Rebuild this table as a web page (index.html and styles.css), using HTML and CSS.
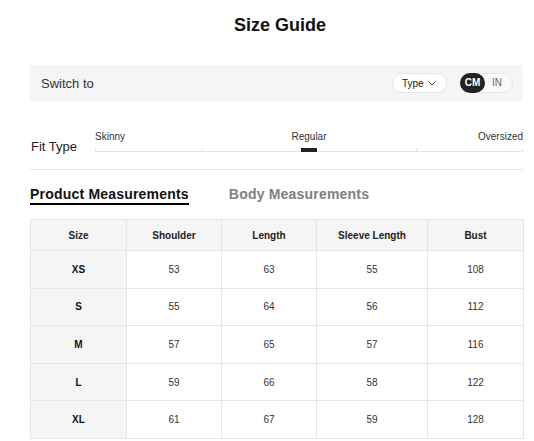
FILE: index.html
```html
<!DOCTYPE html>
<html lang="en">
<head>
<meta charset="utf-8">
<title>Size Guide</title>
<link rel="stylesheet" href="styles.css">
</head>
<body>
<div class="page">
  <h1 class="title">Size Guide</h1>

  <div class="switch-bar">
    <span class="switch-label">Switch to</span>
    <div class="switch-controls">
      <button class="type-pill">Type
        <svg class="chev" width="8" height="5" viewBox="0 0 8 5"><path d="M0.5 0.5 L4 4 L7.5 0.5" fill="none" stroke="#444" stroke-width="1"/></svg>
      </button>
      <div class="unit-toggle">
        <span class="unit active">CM</span>
        <span class="unit">IN</span>
      </div>
    </div>
  </div>

  <div class="fit-row">
    <div class="fit-label">Fit Type</div>
    <div class="fit-slider">
      <div class="fit-names">
        <span class="n-left">Skinny</span>
        <span class="n-mid">Regular</span>
        <span class="n-right">Oversized</span>
      </div>
      <div class="track">
        <span class="track-line"></span>
        <span class="tick t0"></span>
        <span class="tick t1"></span>
        <span class="tick t3"></span>
        <span class="tick t4"></span>
        <span class="marker"></span>
      </div>
    </div>
  </div>

  <div class="divider"></div>

  <div class="tabs">
    <span class="tab active">Product Measurements</span>
    <span class="tab">Body Measurements</span>
  </div>

  <table class="size-table">
    <colgroup>
      <col class="c1"><col class="c2"><col class="c3"><col class="c4"><col class="c5">
    </colgroup>
    <thead>
      <tr><th>Size</th><th>Shoulder</th><th>Length</th><th>Sleeve Length</th><th>Bust</th></tr>
    </thead>
    <tbody>
      <tr><th>XS</th><td>53</td><td>63</td><td>55</td><td>108</td></tr>
      <tr><th>S</th><td>55</td><td>64</td><td>56</td><td>112</td></tr>
      <tr><th>M</th><td>57</td><td>65</td><td>57</td><td>116</td></tr>
      <tr><th>L</th><td>59</td><td>66</td><td>58</td><td>122</td></tr>
      <tr><th>XL</th><td>61</td><td>67</td><td>59</td><td>128</td></tr>
    </tbody>
  </table>
</div>
</body>
</html>
```
FILE: styles.css
```css
* { box-sizing: border-box; }
html, body { margin: 0; padding: 0; background: #fff; }
body { font-family: "Liberation Sans", Arial, sans-serif; color: #222; }

.page { padding: 0 11px 0 30px; width: 534px; }

.title {
  margin: 0 0 29px 0;
  padding: 14px 0 0 7px;
  font-size: 18px;
  line-height: 22px;
  font-weight: 700;
  text-align: center;
  color: #111;
}

.switch-bar {
  height: 36px;
  background: #f5f5f5;
  padding: 0 10px;
  display: flex;
  align-items: center;
  justify-content: space-between;
}
.switch-label { font-size: 13px; color: #333; padding-left: 1px; }
.switch-controls { display: flex; align-items: center; gap: 13px; }

.type-pill {
  height: 20px;
  width: 55px;
  border: 1px solid #e5e5e5;
  border-radius: 10px;
  background: #fff;
  font-family: inherit;
  font-size: 10px;
  color: #222;
  padding: 0 0 0 9px;
  display: flex;
  align-items: center;
  gap: 4px;
  margin: 0 0 0 1px;
}
.chev { display: block; margin-top: 1px; }

.unit-toggle {
  height: 20px;
  border: 1px solid #e5e5e5;
  border-radius: 10px;
  background: #fafafa;
  display: flex;
  align-items: center;
  margin-right: 0;
}
.unit { font-size: 10px; color: #666; padding: 0 10px 0 7px; line-height: 18px; }
.unit.active {
  height: 20px;
  width: 25px;
  margin: -1px 0 -1px -1px;
  padding: 0;
  background: #222;
  color: #fff;
  font-weight: 700;
  border-radius: 10px;
  display: flex;
  align-items: center;
  justify-content: center;
}

.fit-row { display: flex; align-items: flex-start; margin-top: 30px; }
.fit-label { width: 65px; padding-top: 8px; font-size: 13px; line-height: 16px; color: #222; padding-left: 1px; }
.fit-slider { flex: 1; }
.fit-names {
  display: grid;
  grid-template-columns: 1fr auto 1fr;
  font-size: 10px;
  line-height: 12px;
  color: #333;
}
.n-left { text-align: left; }
.n-mid { text-align: center; }
.n-right { text-align: right; }
.track { position: relative; height: 10px; }
.track-line { position: absolute; left: 0; right: 0; top: 8px; height: 1px; background: #e3e3e3; }
.tick { position: absolute; top: 5px; width: 1px; height: 3px; background: #e3e3e3; }
.t0 { left: 0; }
.t1 { left: 25%; }
.t3 { left: 75%; }
.t4 { right: 0; }
.marker { position: absolute; top: 5px; left: 50%; width: 16px; height: 4px; margin-left: -8px; background: #222; }

.divider { height: 1px; background: #e5e5e5; margin-top: 14px; }

.tabs { display: flex; gap: 40px; margin-top: 16px; }
.tab { font-size: 14px; font-weight: 700; line-height: 16px; letter-spacing: 0.2px; color: #808080; padding-bottom: 1px; border-bottom: 2px solid transparent; }
.tab.active { color: #111; border-bottom-color: #000; }

.size-table {
  margin-top: 14px;
  width: 493px;
  border-collapse: collapse;
  table-layout: fixed;
  font-size: 10px;
}
.c1 { width: 96px; }
.c2 { width: 95px; }
.c3 { width: 95px; }
.c4 { width: 111px; }
.c5 { width: 96px; }
.size-table th, .size-table td {
  border: 1px solid #e5e5e5;
  text-align: center;
  padding: 0;
}
.size-table thead tr { height: 31px; }
.size-table thead th { background: #f5f5f5; font-weight: 700; color: #222; }
.size-table tbody tr { height: 37.6px; }
.size-table tbody th { background: #f5f5f5; font-weight: 700; color: #111; }
.size-table tbody td { color: #333; }
```
